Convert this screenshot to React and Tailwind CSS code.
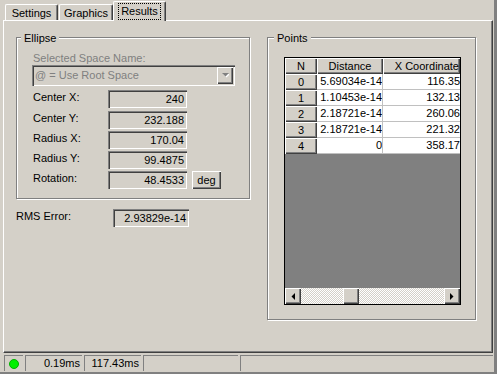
import React from "react";

const raised =
  "shadow-[inset_1px_1px_0_#fff,inset_-1px_-1px_0_#404040,inset_-2px_-2px_0_#808080]";
const sunken =
  "shadow-[inset_1px_1px_0_#808080,inset_2px_2px_0_#404040,inset_-1px_-1px_0_#fff,inset_-2px_-2px_0_#d4d0c8]";
const thinSunken = "border-t border-l border-[#808080] border-b-white border-r-white";

const rows = [
  ["0", "5.69034e-14", "116.35"],
  ["1", "1.10453e-14", "132.13"],
  ["2", "2.18721e-14", "260.06"],
  ["3", "2.18721e-14", "221.32"],
  ["4", "0", "358.17"],
];

const fields = [
  { label: "Center X:", value: "240", mt: "mt-0" },
  { label: "Center Y:", value: "232.188", mt: "mt-[3px]" },
  { label: "Radius X:", value: "170.04", mt: "mt-[2px]" },
  { label: "Radius Y:", value: "99.4875", mt: "mt-[2px]" },
  { label: "Rotation:", value: "48.4533", mt: "mt-[2px]", unit: true },
];

const Group = ({ label, left, className, children }) => (
  <div
    className={`relative border border-[#808080] shadow-[inset_1px_1px_0_#fff,1px_1px_0_#fff] ${className}`}
  >
    <span
      className={`absolute -top-[5px] bg-[#d4d0c8] px-[3px] leading-[11px] ${left}`}
    >
      {label}
    </span>
    {children}
  </div>
);

const Field = ({ value, width }) => (
  <div
    className={`h-[18px] ${width} ${sunken} bg-[#d4d0c8] flex items-center justify-end pr-[3px]`}
  >
    {value}
  </div>
);

const Arrow = ({ dir }) => (
  <svg width="4" height="7" viewBox="0 0 4 7">
    {dir === "left" ? (
      <polygon points="4,0 4,7 0.5,3.5" fill="#000" />
    ) : (
      <polygon points="0,0 0,7 3.5,3.5" fill="#000" />
    )}
  </svg>
);

const Tab = ({ children, active, width }) =>
  active ? (
    <div
      className={`relative z-10 -mb-[1px] h-[20px] ${width} bg-[#d4d0c8] border-t border-l border-white rounded-t-[2px] border-r border-r-[#404040] shadow-[inset_-1px_0_0_#808080] flex items-start justify-center pt-[1px]`}
    >
      <span className="h-[17px] px-[2px] border border-dotted border-black flex items-center">
        {children}
      </span>
    </div>
  ) : (
    <div
      className={`h-[16px] ${width} border-t border-l border-white rounded-t-[2px] border-r border-r-[#404040] shadow-[inset_-1px_0_0_#808080] flex items-center justify-center pt-[2px]`}
    >
      {children}
    </div>
  );

export default function App() {
  return (
    <div className="w-[497px] h-[374px] bg-[#d4d0c8] border-r-[3px] border-b-[2px] border-[#808080] flex flex-col font-['Liberation_Sans',Arial,sans-serif] text-[11px] leading-none text-black select-none overflow-hidden">
      {/* tabs */}
      <div className="h-[20px] flex items-end pl-[5px]">
        <Tab width="w-[53px]">Settings</Tab>
        <div className="w-[1px]" />
        <Tab width="w-[54px]">Graphics</Tab>
        <Tab width="w-[53px]" active>
          Results
        </Tab>
      </div>

      {/* tab page */}
      <div className="ml-[3px] w-[490px] h-[333px] border-t border-l border-white border-r border-b border-r-[#404040] border-b-[#404040] shadow-[inset_-1px_-1px_0_#808080] flex items-start pt-[16px] pl-[12px]">
        {/* left column */}
        <div className="w-[234px] flex flex-col">
          <Group label="Ellipse" left="left-[4px]" className="h-[162px] pt-[15px] pl-[15px]">
            <div className="ml-[1px] h-[11px] text-[#808080]">Selected Space Name:</div>
            <div
              className={`mt-[1px] w-[203px] h-[21px] ${sunken} flex items-center justify-between pl-[3px] pr-[2px]`}
            >
              <span className="text-[#808080]">@ = Use Root Space</span>
              <div
                className={`w-[16px] h-[17px] ${raised} flex items-center justify-center`}
              >
                <svg width="7" height="5" viewBox="0 0 7 5">
                  <polygon points="1,1 8,1 4.5,4.5" fill="#fff" />
                  <polygon points="0,0 7,0 3.5,3.5" fill="#808080" />
                </svg>
              </div>
            </div>
            <div className="mt-[4px] flex flex-col">
              {fields.map((f) => (
                <div key={f.label} className={`flex items-start ${f.mt}`}>
                  <span className="w-[75px] ml-[1px] mt-[2px]">{f.label}</span>
                  <Field value={f.value} width="w-[79px]" />
                  {f.unit && (
                    <div
                      className={`ml-[5px] w-[29px] h-[18px] ${raised} flex items-center justify-center`}
                    >
                      deg
                    </div>
                  )}
                </div>
              ))}
            </div>
          </Group>

          <div className="mt-[10px] flex items-start">
            <span className="w-[97px] mt-[2px]">RMS Error:</span>
            <Field value="2.93829e-14" width="w-[76px]" />
          </div>
        </div>

        {/* points */}
        <Group
          label="Points"
          left="left-[6px]"
          className="ml-[17px] w-[209px] h-[283px] pt-[19px] pl-[16px]"
        >
          <div className="w-[177px] h-[248px] border border-black flex flex-col overflow-hidden">
            <div className="flex h-[16px] shrink-0">
              <div className={`w-[32px] ${raised} flex items-center justify-center`}>N</div>
              <div className={`w-[66px] ${raised} flex items-center justify-center`}>
                Distance
              </div>
              <div
                className={`w-[77px] ${raised} flex items-center justify-end pr-[1px] overflow-hidden whitespace-nowrap`}
              >
                X Coordinate
              </div>
            </div>
            {rows.map(([n, d, x]) => (
              <div key={n} className="flex h-[16px] shrink-0">
                <div className={`w-[32px] ${raised} flex items-center justify-center`}>{n}</div>
                <div className="w-[66px] bg-white border-r border-b border-[#c0c0c0] flex items-center justify-end overflow-hidden whitespace-nowrap">
                  {d}
                </div>
                <div className="w-[77px] bg-white border-b border-[#c0c0c0] flex items-center justify-end overflow-hidden whitespace-nowrap">
                  {x}
                </div>
              </div>
            ))}
            <div className="flex-1 bg-[#808080]" />
            <div className="h-[16px] shrink-0 flex">
              <div className={`w-[16px] h-[16px] ${raised} bg-[#d4d0c8] flex items-center justify-center`}>
                <Arrow dir="left" />
              </div>
              <div className="flex-1 bg-[repeating-conic-gradient(#fff_0%_25%,#d4d0c8_0%_50%)] bg-[length:2px_2px]">
                <div className={`ml-[42px] w-[16px] h-[16px] bg-[#d4d0c8] ${raised}`} />
              </div>
              <div className={`w-[16px] h-[16px] ${raised} bg-[#d4d0c8] flex items-center justify-center`}>
                <Arrow dir="right" />
              </div>
            </div>
          </div>
        </Group>
      </div>

      {/* status bar */}
      <div className="mt-[2px] h-[16px] flex gap-[2px] pl-[4px]">
        <div className={`w-[19px] ${thinSunken} flex items-center justify-center`}>
          <div className="w-[10px] h-[10px] rounded-full bg-[#00f000] border border-[#00b000]" />
        </div>
        <div className={`w-[57px] ${thinSunken} flex items-center justify-end pr-[2px]`}>
          0.19ms
        </div>
        <div className={`w-[57px] ${thinSunken} flex items-center justify-end pr-[2px]`}>
          117.43ms
        </div>
        <div className={`w-[95px] ${thinSunken}`} />
        <div className={`w-[253px] ${thinSunken}`} />
      </div>
    </div>
  );
}
